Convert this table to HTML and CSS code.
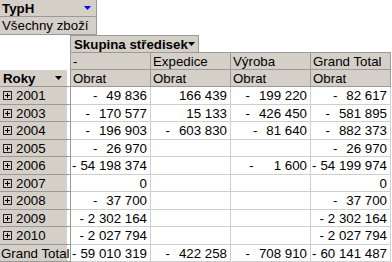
FILE: index.html
```html
<!DOCTYPE html>
<html lang="cs">
<head>
<meta charset="utf-8">
<title>Kontingenční tabulka</title>
<link rel="stylesheet" href="styles.css">
</head>
<body>
<div class="pivot">
  <div class="span-all"><div class="page-box"><span class="bold grow">TypH</span><svg class="arrow" width="7" height="4" viewBox="0 0 7 4"><polygon points="0,0 7,0 3.5,4" fill="#0000ff"/></svg></div></div>
  <div class="span-all"><div class="page-box">Všechny zboží</div></div>

  <div class="corner"></div>
  <div class="span-rest"><div class="col-field"><span class="bold grow">Skupina středisek</span><svg class="arrow" width="7" height="4" viewBox="0 0 7 4"><polygon points="0,0 7,0 3.5,4" fill="#000"/></svg></div></div>

  <div class="corner"></div>
  <div class="hdr top">-</div>
  <div class="hdr top">Expedice</div>
  <div class="hdr top">Výroba</div>
  <div class="hdr top">Grand Total</div>

  <div class="rowhead"><div class="lab"><span class="bold grow">Roky</span><svg class="arrow" width="7" height="4" viewBox="0 0 7 4"><polygon points="0,0 7,0 3.5,4" fill="#000"/></svg></div></div>
  <div class="hdr">Obrat</div>
  <div class="hdr">Obrat</div>
  <div class="hdr">Obrat</div>
  <div class="hdr">Obrat</div>

  <div class="rowhead"><div class="lab"><svg class="plus" width="9" height="9" viewBox="0 0 9 9"><rect x="0.5" y="0.5" width="8" height="8" fill="none" stroke="#222"/><path d="M2 4.5H7M4.5 2V7" stroke="#000"/></svg>2001</div></div>
  <div class="val"><span class="neg">-</span>49 836</div>
  <div class="val">166 439</div>
  <div class="val"><span class="neg">-</span>199 220</div>
  <div class="val"><span class="neg">-</span>82 617</div>

  <div class="rowhead"><div class="lab"><svg class="plus" width="9" height="9" viewBox="0 0 9 9"><rect x="0.5" y="0.5" width="8" height="8" fill="none" stroke="#222"/><path d="M2 4.5H7M4.5 2V7" stroke="#000"/></svg>2003</div></div>
  <div class="val"><span class="neg">-</span>170 577</div>
  <div class="val">15 133</div>
  <div class="val"><span class="neg">-</span>426 450</div>
  <div class="val"><span class="neg">-</span>581 895</div>

  <div class="rowhead"><div class="lab"><svg class="plus" width="9" height="9" viewBox="0 0 9 9"><rect x="0.5" y="0.5" width="8" height="8" fill="none" stroke="#222"/><path d="M2 4.5H7M4.5 2V7" stroke="#000"/></svg>2004</div></div>
  <div class="val"><span class="neg">-</span>196 903</div>
  <div class="val"><span class="neg">-</span>603 830</div>
  <div class="val"><span class="neg">-</span>81 640</div>
  <div class="val"><span class="neg">-</span>882 373</div>

  <div class="rowhead"><div class="lab"><svg class="plus" width="9" height="9" viewBox="0 0 9 9"><rect x="0.5" y="0.5" width="8" height="8" fill="none" stroke="#222"/><path d="M2 4.5H7M4.5 2V7" stroke="#000"/></svg>2005</div></div>
  <div class="val"><span class="neg">-</span>26 970</div>
  <div class="val"></div>
  <div class="val"></div>
  <div class="val"><span class="neg">-</span>26 970</div>

  <div class="rowhead"><div class="lab"><svg class="plus" width="9" height="9" viewBox="0 0 9 9"><rect x="0.5" y="0.5" width="8" height="8" fill="none" stroke="#222"/><path d="M2 4.5H7M4.5 2V7" stroke="#000"/></svg>2006</div></div>
  <div class="val"><span class="neg long">-</span>54 198 374</div>
  <div class="val"></div>
  <div class="val"><span class="neg short">-</span>1 600</div>
  <div class="val"><span class="neg long">-</span>54 199 974</div>

  <div class="rowhead"><div class="lab"><svg class="plus" width="9" height="9" viewBox="0 0 9 9"><rect x="0.5" y="0.5" width="8" height="8" fill="none" stroke="#222"/><path d="M2 4.5H7M4.5 2V7" stroke="#000"/></svg>2007</div></div>
  <div class="val">0</div>
  <div class="val"></div>
  <div class="val"></div>
  <div class="val">0</div>

  <div class="rowhead"><div class="lab"><svg class="plus" width="9" height="9" viewBox="0 0 9 9"><rect x="0.5" y="0.5" width="8" height="8" fill="none" stroke="#222"/><path d="M2 4.5H7M4.5 2V7" stroke="#000"/></svg>2008</div></div>
  <div class="val"><span class="neg">-</span>37 700</div>
  <div class="val"></div>
  <div class="val"></div>
  <div class="val"><span class="neg">-</span>37 700</div>

  <div class="rowhead"><div class="lab"><svg class="plus" width="9" height="9" viewBox="0 0 9 9"><rect x="0.5" y="0.5" width="8" height="8" fill="none" stroke="#222"/><path d="M2 4.5H7M4.5 2V7" stroke="#000"/></svg>2009</div></div>
  <div class="val"><span class="neg long">-</span>2 302 164</div>
  <div class="val"></div>
  <div class="val"></div>
  <div class="val"><span class="neg long">-</span>2 302 164</div>

  <div class="rowhead"><div class="lab"><svg class="plus" width="9" height="9" viewBox="0 0 9 9"><rect x="0.5" y="0.5" width="8" height="8" fill="none" stroke="#222"/><path d="M2 4.5H7M4.5 2V7" stroke="#000"/></svg>2010</div></div>
  <div class="val"><span class="neg long">-</span>2 027 794</div>
  <div class="val"></div>
  <div class="val"></div>
  <div class="val"><span class="neg long">-</span>2 027 794</div>

  <div class="rowhead"><div class="lab total">Grand Total</div></div>
  <div class="val"><span class="neg long">-</span>59 010 319</div>
  <div class="val"><span class="neg">-</span>422 258</div>
  <div class="val"><span class="neg">-</span>708 910</div>
  <div class="val"><span class="neg long">-</span>60 141 487</div>
</div>
</body>
</html>
```

FILE: styles.css
```css
html, body {
  margin: 0;
  padding: 0;
  background: #ffffff;
}

body {
  font-family: "Liberation Sans", Arial, sans-serif;
  font-size: 13.3px;
  color: #000000;
}

.pivot {
  display: grid;
  grid-template-columns: 71px repeat(4, 80px);
  grid-template-rows: 17px 18px 17px 18px 17px 18px 17px 18px 17px 18px 17px 18px 17px 18px 17px;
}

.pivot > div {
  box-sizing: border-box;
  min-width: 0;
  overflow: hidden;
  white-space: pre;
}

.bold {
  font-weight: bold;
}

.grow {
  flex: 1;
}

.span-all {
  grid-column: 1 / -1;
}

.span-rest {
  grid-column: 2 / -1;
}

.page-box {
  box-sizing: border-box;
  width: 97px;
  height: 100%;
  display: flex;
  align-items: center;
  padding-left: 2px;
  padding-right: 5px;
  background: #d4d0c8;
  border-right: 1px solid #9a9a9a;
  border-bottom: 1px solid #9a9a9a;
}

.arrow {
  flex: none;
}

.corner {
  border-right: 1px solid #9a9a9a;
}

.col-field {
  box-sizing: border-box;
  width: 128px;
  height: 100%;
  display: flex;
  align-items: center;
  padding-left: 3px;
  padding-right: 3px;
  background: #d4d0c8;
  border-top: 1px solid #9a9a9a;
  border-right: 1px solid #9a9a9a;
}

.hdr {
  display: flex;
  align-items: center;
  padding-left: 2px;
  background: #d4d0c8;
  border-right: 1px solid #9a9a9a;
  border-bottom: 1px solid #9a9a9a;
}

.hdr.top {
  border-top: 1px solid #9a9a9a;
}

.rowhead {
  display: flex;
  border-right: 1px solid #9a9a9a;
  border-bottom: 1px solid #9a9a9a;
}

.lab {
  box-sizing: border-box;
  width: 67px;
  height: 100%;
  display: flex;
  align-items: center;
  padding-left: 3px;
  padding-right: 5px;
  background: #d4d0c8;
}

.lab.total {
  padding-left: 1px;
}

.plus {
  flex: none;
  margin-right: 4px;
}

.val {
  display: flex;
  align-items: center;
  justify-content: flex-end;
  padding-right: 3px;
  border-right: 1px solid #cfcfcf;
  border-bottom: 1px solid #cfcfcf;
}

.neg {
  margin-right: 9px;
}

.neg.long {
  margin-right: 4px;
}

.neg.short {
  margin-right: 20px;
}
```
